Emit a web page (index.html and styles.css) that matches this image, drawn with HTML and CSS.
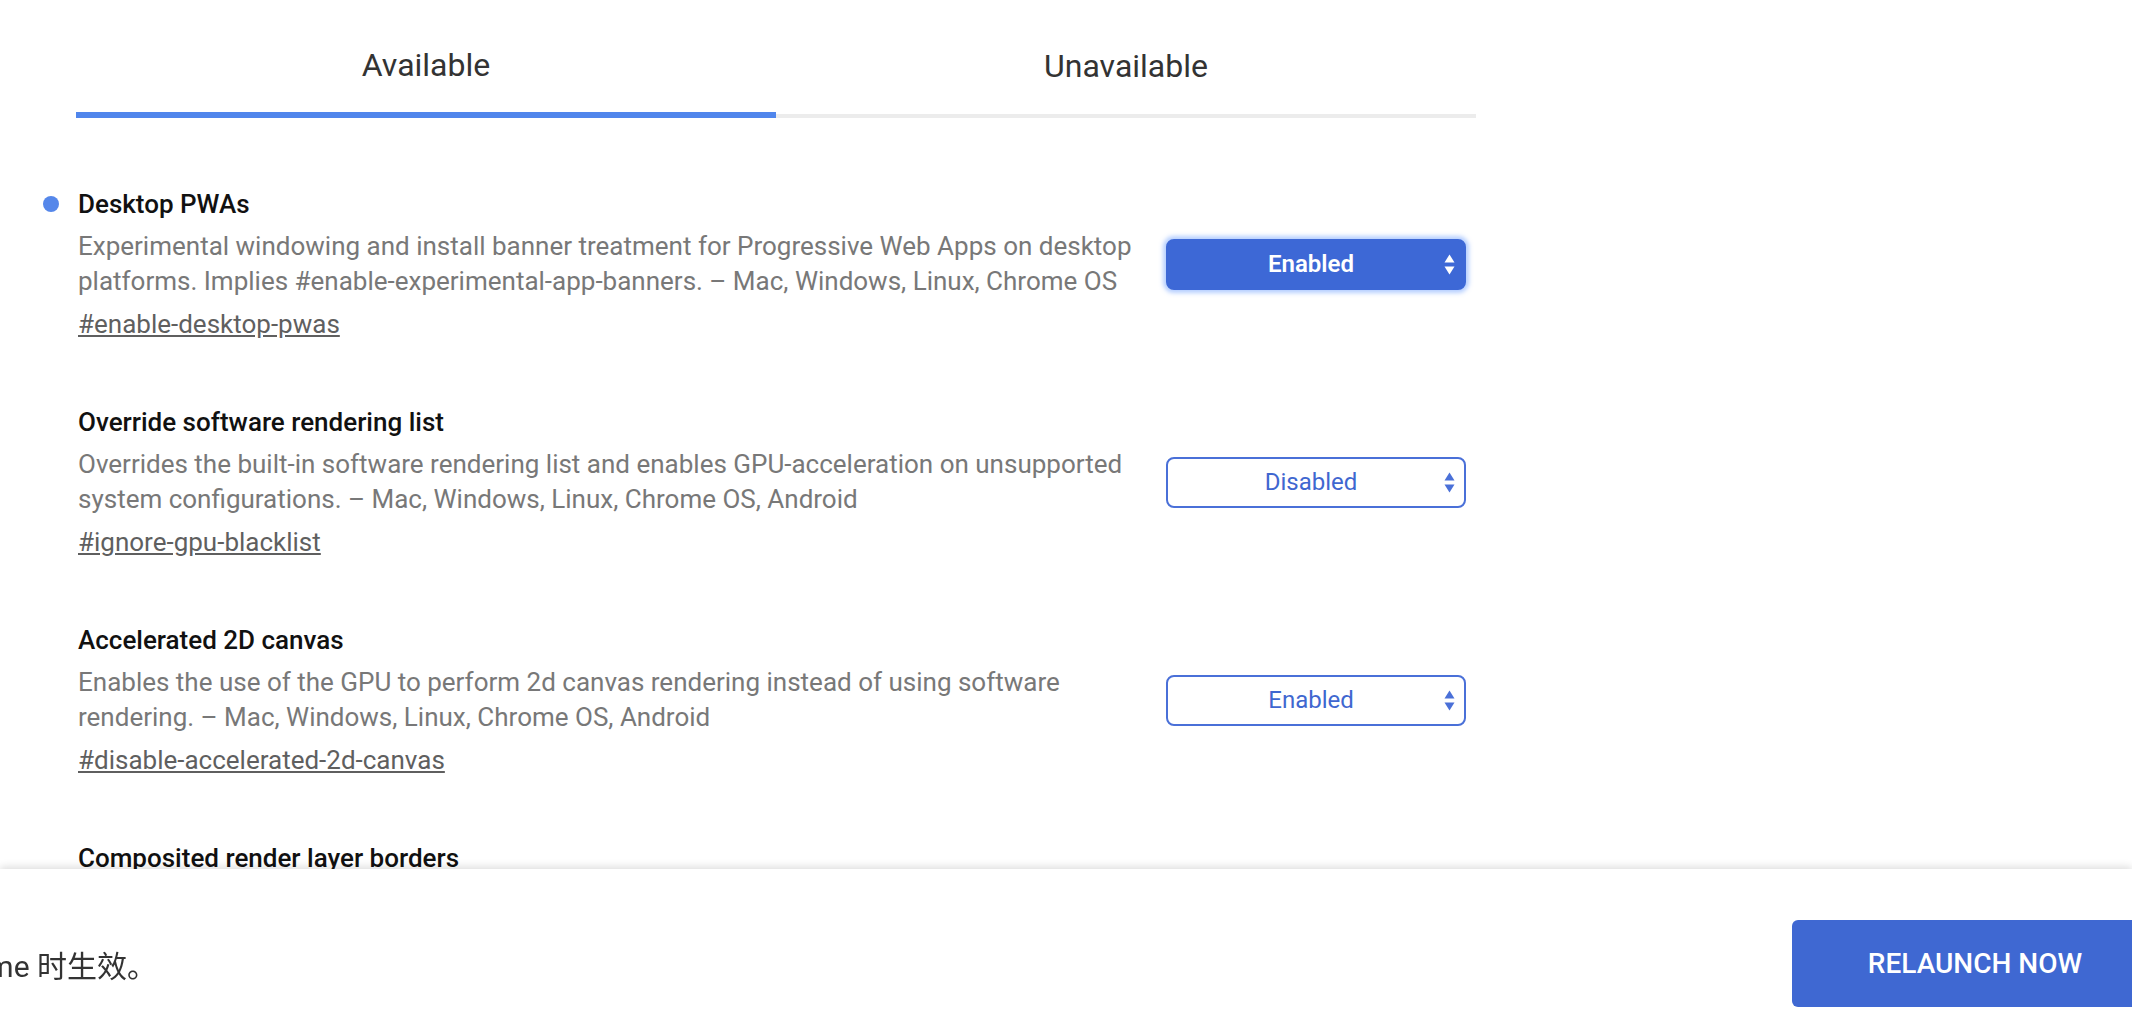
FILE: index.html
```html
<!DOCTYPE html>
<html lang="en">
<head>
<meta charset="utf-8">
<title>Experiments</title>
<link rel="stylesheet" href="styles.css">
</head>
<body>
<main class="content">
  <div class="tabs">
    <div class="tab active">Available</div>
    <div class="tab">Unavailable</div>
  </div>
  <div class="flags">
    <section class="flag">
      <div class="flag-text">
        <h3 class="flag-name modified">Desktop PWAs</h3>
        <p class="flag-desc">Experimental windowing and install banner treatment for Progressive Web Apps on desktop platforms. Implies #enable-experimental-app-banners. – Mac, Windows, Linux, Chrome OS</p>
        <a class="flag-link" href="#enable-desktop-pwas">#enable-desktop-pwas</a>
      </div>
      <div class="select focused"><span>Enabled</span><svg class="arrows" viewBox="0 0 11 21" width="11" height="21"><path d="M5.5 0.5 L10.5 8.5 H0.5 Z"/><path d="M5.5 20.5 L10.5 12.5 H0.5 Z"/></svg></div>
    </section>
    <section class="flag">
      <div class="flag-text">
        <h3 class="flag-name">Override software rendering list</h3>
        <p class="flag-desc">Overrides the built-in software rendering list and enables GPU-acceleration on unsupported system configurations. – Mac, Windows, Linux, Chrome OS, Android</p>
        <a class="flag-link" href="#ignore-gpu-blacklist">#ignore-gpu-blacklist</a>
      </div>
      <div class="select"><span>Disabled</span><svg class="arrows" viewBox="0 0 11 21" width="11" height="21"><path d="M5.5 0.5 L10.5 8.5 H0.5 Z"/><path d="M5.5 20.5 L10.5 12.5 H0.5 Z"/></svg></div>
    </section>
    <section class="flag">
      <div class="flag-text">
        <h3 class="flag-name">Accelerated 2D canvas</h3>
        <p class="flag-desc">Enables the use of the GPU to perform 2d canvas rendering instead of using software rendering. – Mac, Windows, Linux, Chrome OS, Android</p>
        <a class="flag-link" href="#disable-accelerated-2d-canvas">#disable-accelerated-2d-canvas</a>
      </div>
      <div class="select"><span>Enabled</span><svg class="arrows" viewBox="0 0 11 21" width="11" height="21"><path d="M5.5 0.5 L10.5 8.5 H0.5 Z"/><path d="M5.5 20.5 L10.5 12.5 H0.5 Z"/></svg></div>
    </section>
    <section class="flag">
      <div class="flag-text">
        <h3 class="flag-name">Composited render layer borders</h3>
        <p class="flag-desc">Renders a border around composited Render Layers to help debug and study layer compositing. – Mac, Windows, Linux, Chrome OS, Android</p>
        <a class="flag-link" href="#composited-layer-borders">#composited-layer-borders</a>
      </div>
      <div class="select"><span>Default</span><svg class="arrows" viewBox="0 0 11 21" width="11" height="21"><path d="M5.5 0.5 L10.5 8.5 H0.5 Z"/><path d="M5.5 20.5 L10.5 12.5 H0.5 Z"/></svg></div>
    </section>
  </div>
</main>
<footer class="needs-restart">
  <div class="restart-msg"><span>您所做的更改将在您下次重新启动 Google Chrome 时生效。</span></div>
  <button class="relaunch">RELAUNCH NOW</button>
</footer>
</body>
</html>
```
FILE: styles.css
```css
html, body {
  margin: 0;
  padding: 0;
  background: #fff;
  overflow: hidden;
}
body {
  font-family: Roboto, "Noto Sans", "Noto Sans CJK SC", sans-serif;
  color: #202124;
}
.content {
  margin-left: 76px;
  width: 1400px;
}
.tabs {
  display: flex;
  align-items: flex-end;
}
.tab {
  flex: 1;
  box-sizing: border-box;
  height: 118px;
  padding-top: 18px;
  display: flex;
  align-items: center;
  justify-content: center;
  font-size: 32px;
  color: #333;
  border-bottom: 4px solid #ececec;
}
.tab.active {
  border-bottom: 6px solid #5086ec;
}
.flags {
  margin-top: 69px;
  padding-left: 2px;
  padding-right: 10px;
  display: flex;
  flex-direction: column;
  gap: 64px;
}
.flag {
  display: flex;
  align-items: center;
  justify-content: space-between;
}
.flag-text {
  width: 1072px;
}
.flag-name {
  position: relative;
  margin: 0 0 8px;
  font-size: 26px;
  line-height: 34px;
  font-weight: 500;
  color: #111;
}
.flag-name.modified::before {
  content: "";
  position: absolute;
  left: -35px;
  top: 9px;
  width: 16px;
  height: 16px;
  border-radius: 50%;
  background: #5587ea;
}
.flag-desc {
  margin: 0;
  font-size: 26px;
  line-height: 35px;
  color: #787878;
}
.flag-link {
  display: inline-block;
  margin-top: 8px;
  font-size: 26px;
  line-height: 34px;
  color: #5f5f5f;
  text-decoration: underline;
}
.select {
  box-sizing: border-box;
  width: 300px;
  height: 51px;
  border: 2px solid #4a70d8;
  border-radius: 8px;
  display: flex;
  align-items: center;
  padding: 0 9px 0 0;
  color: #3f67d0;
  font-size: 24px;
}
.select span {
  flex: 1;
  text-align: center;
  padding-left: 10px;
}
.select .arrows {
  fill: #4a70d8;
}
.select.focused {
  background: #3d68d6;
  border-color: #3d68d6;
  color: #fff;
  font-weight: 600;
  box-shadow: 0 0 4px 3px rgba(110, 160, 255, 0.5);
}
.select.focused .arrows {
  fill: #fff;
}
.needs-restart {
  position: fixed;
  left: 0;
  right: 0;
  bottom: 0;
  height: 141px;
  background: #fff;
  box-shadow: 0 -2px 8px rgba(0, 0, 0, 0.14);
  display: flex;
  justify-content: space-between;
  align-items: flex-start;
  padding-top: 51px;
  box-sizing: border-box;
  overflow: hidden;
}
.restart-msg {
  width: 157px;
  height: 87px;
  display: flex;
  justify-content: flex-end;
  align-items: center;
  overflow: hidden;
  white-space: nowrap;
  font-size: 30px;
  color: #333;
}
.relaunch {
  flex: none;
  width: 366px;
  height: 87px;
  margin-right: -26px;
  border: none;
  border-radius: 6px;
  background: #3f68d2;
  color: #fff;
  font-family: Roboto, sans-serif;
  font-size: 28px;
  font-weight: 500;
}
```
